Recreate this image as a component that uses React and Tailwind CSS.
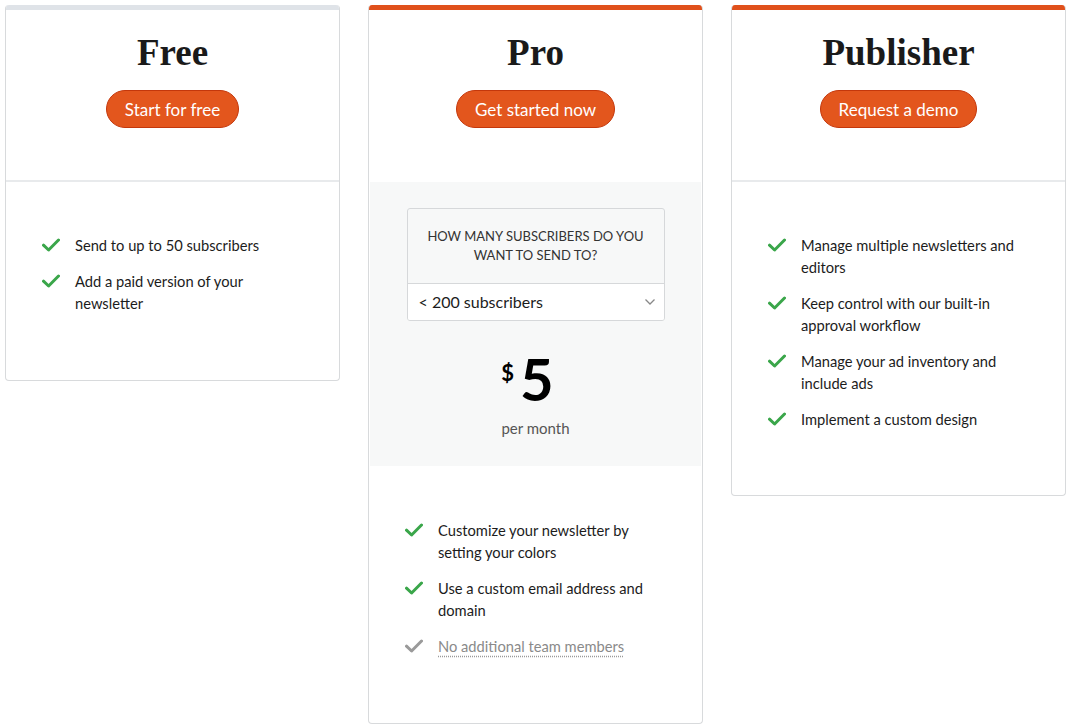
import React from "react";

const Check = ({ gray }) => (
  <svg width="18" height="14" viewBox="0 0 18 14" className="shrink-0 mt-[4px]">
    <path
      d="M1.5 7.2 L6.6 12 L16.5 2"
      fill="none"
      stroke={gray ? "#9a9a9a" : "#3aa64a"}
      strokeWidth="3"
      strokeLinecap="round"
      strokeLinejoin="round"
    />
  </svg>
);

const Item = ({ children, gray }) => (
  <li className="flex gap-[15px]">
    <Check gray={gray} />
    <span
      className={
        gray
          ? "text-[#8a8a8a] underline decoration-dotted decoration-[#9a9a9a] underline-offset-[4px]"
          : "text-[#1c1c1c]"
      }
    >
      {children}
    </span>
  </li>
);

const Header = ({ title, cta }) => (
  <div className="h-[170px] flex flex-col items-center pt-[19px]">
    <h2
      className="text-[37px] leading-[48px] font-bold text-[#1a1a1a]"
      style={{ fontFamily: '"Liberation Serif", "Times New Roman", serif' }}
    >
      {title}
    </h2>
    <button className="mt-[13px] h-[38px] px-[18px] rounded-full bg-[#e3561d] border border-[#c4370b] text-white text-[17px] leading-none">
      {cta}
    </button>
  </div>
);

const Card = ({ top, children }) => (
  <div className="w-[335px] border border-t-0 border-[#d8dadc] rounded-[4px] overflow-hidden bg-white">
    <div className={`h-[5px] ${top}`} />
    {children}
  </div>
);

export default function App() {
  return (
    <div
      className="w-[1070px] h-[728px] bg-white flex items-start gap-[28px] pl-[5px] pt-[5px]"
      style={{ fontFamily: 'Lato, "Liberation Sans", sans-serif' }}
    >
      <Card top="bg-[#dfe3e8]">
        <Header title="Free" cta="Start for free" />
        <div className="h-[2px] bg-[#e8eaec]" />
        <ul className="flex flex-col gap-[14px] pl-[36px] pr-[30px] pt-[52px] pb-[66px] text-[14.7px] leading-[22px]">
          <Item>Send to up to 50 subscribers</Item>
          <Item>Add a paid version of your newsletter</Item>
        </ul>
      </Card>

      <Card top="bg-[#e0501b]">
        <Header title="Pro" cta="Get started now" />
        <div className="h-[2px] bg-white" />
        <div className="bg-[#f7f8f8] mx-[1px] pt-[26px] pb-[27px] flex flex-col items-center">
          <div className="w-[258px] border border-[#d6d8da] rounded-[3px] overflow-hidden">
            <div className="h-[74px] flex items-center justify-center text-center text-[13px] leading-[19px] text-[#333] uppercase px-[10px]">
              How many subscribers do you want to send to?
            </div>
            <div className="h-[37px] bg-white border-t border-[#d6d8da] flex items-center justify-between pl-[11px] pr-[8px]">
              <span className="text-[16px] text-[#1c1c1c]">&lt; 200 subscribers</span>
              <svg width="12" height="8" viewBox="0 0 12 8">
                <path d="M1.5 1.5 L6 6 L10.5 1.5" fill="none" stroke="#888" strokeWidth="1.3" />
              </svg>
            </div>
          </div>
          <div className="mt-[29px] flex items-start text-black pr-[16px]">
            <span className="text-[22px] leading-none mt-[12px] mr-[6px] font-bold">$</span>
            <span className="text-[58px] leading-[58px] font-bold">5</span>
          </div>
          <div className="mt-[9px] text-[15px] leading-[22px] text-[#555]">per month</div>
        </div>
        <ul className="flex flex-col gap-[14px] pl-[36px] pr-[30px] pt-[53px] pb-[66px] text-[14.7px] leading-[22px]">
          <Item>Customize your newsletter by setting your colors</Item>
          <Item>Use a custom email address and domain</Item>
          <Item gray>No additional team members</Item>
        </ul>
      </Card>

      <Card top="bg-[#e0501b]">
        <Header title="Publisher" cta="Request a demo" />
        <div className="h-[2px] bg-[#e8eaec]" />
        <ul className="flex flex-col gap-[14px] pl-[36px] pr-[40px] pt-[52px] pb-[65px] text-[14.7px] leading-[22px]">
          <Item>Manage multiple newsletters and editors</Item>
          <Item>Keep control with our built-in approval workflow</Item>
          <Item>Manage your ad inventory and include ads</Item>
          <Item>Implement a custom design</Item>
        </ul>
      </Card>
    </div>
  );
}
